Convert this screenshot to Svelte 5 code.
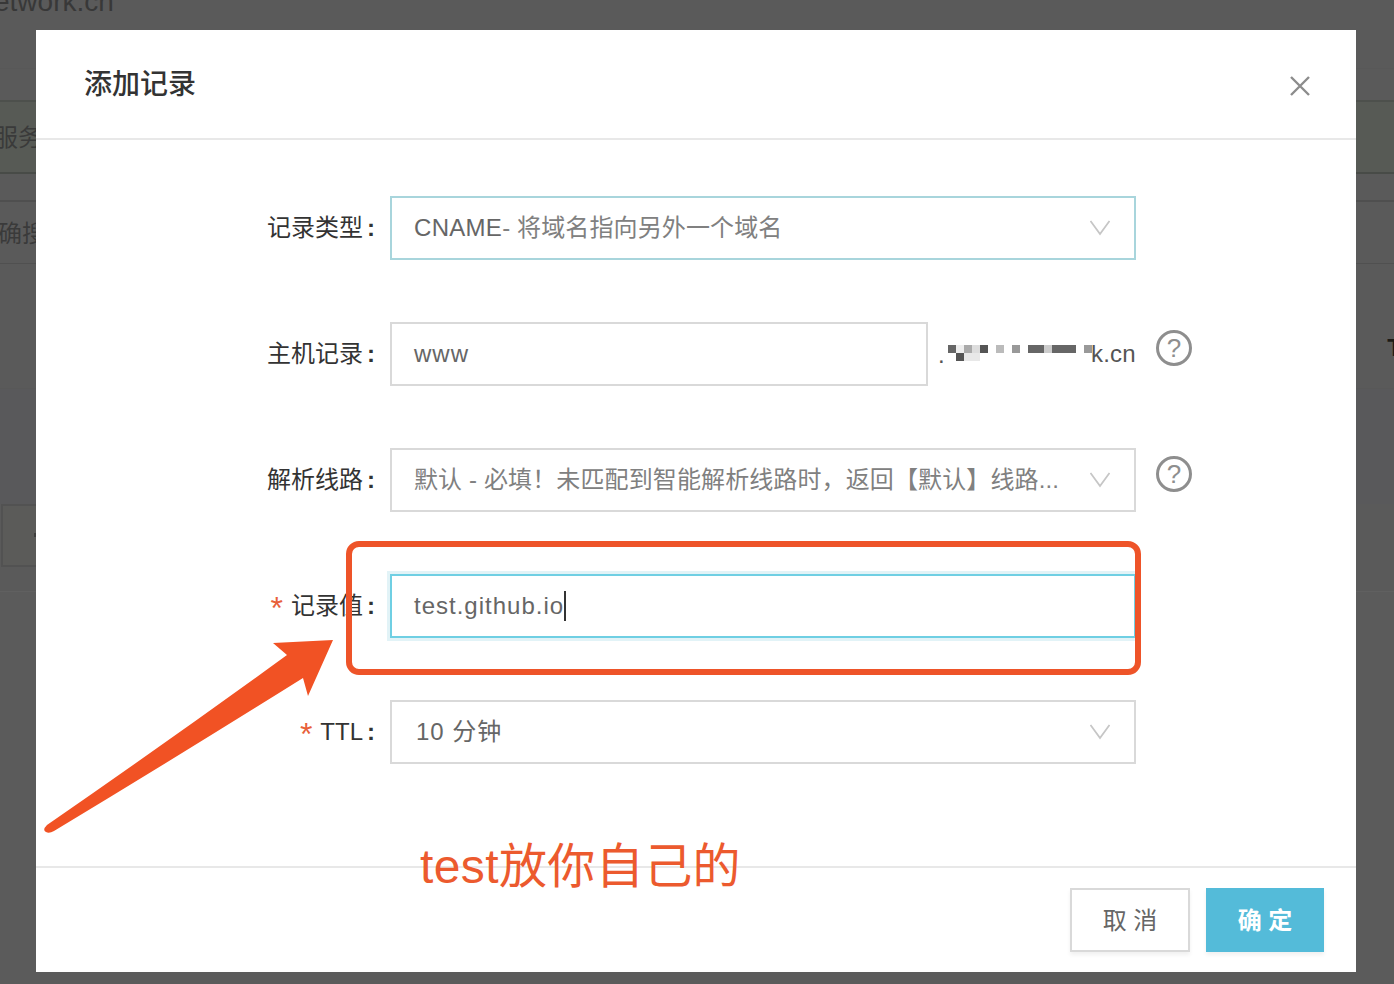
<script lang='ts'>
  // mosaic over the blurred domain name: x, y, width, colour
  const mosaic: [number, number, number, string][] = [
    [0, 0, 8, '#666'], [8, 0, 8, '#eee'], [16, 0, 8, '#aaa'], [24, 0, 8, '#ddd'], [32, 0, 8, '#555'],
    [48, 0, 8, '#bbb'], [64, 0, 8, '#999'], [80, 0, 16, '#666'], [96, 0, 8, '#ccc'], [104, 0, 24, '#666'],
    [136, 0, 8, '#999'], [8, 8, 8, '#555'], [16, 8, 16, '#e8e8e8']
  ]
</script>

<div class='page'>
  <div class='backdrop'>
    <div class='band top'><span class='domain'>etwork.cn</span></div>
    <div class='band sub'></div>
    <div class='band notice'><span class='cut-a'>服务</span></div>
    <div class='band gap'></div>
    <div class='band search'><span class='cut-b'>确搜</span></div>
    <div class='band table'><span class='edge'>T</span></div>
    <div class='band empty'></div>
    <div class='band pager'><div class='pager-box'><i></i></div></div>
    <div class='band after'></div>
    <div class='band rest'></div>
  </div>

  <div class='modal'>
    <header>
      <h2>添加记录</h2>
      <svg class='close' width='20' height='20' viewBox='0 0 20 20'>
        <path d='M1 1 L19 19 M19 1 L1 19' />
      </svg>
    </header>

    <div class='body'>
      <div class='row'>
        <label>记录类型<b>:</b></label>
        <div class='field wide active-select'>
          <span class='value cname'>CNAME<span class='soft'>- 将域名指向另外一个域名</span></span>
          <svg class='chevron' width='20' height='16' viewBox='0 0 20 16'><path d='M0.5 1 L10 14 L19.5 1' /></svg>
        </div>
      </div>

      <div class='row'>
        <label>主机记录<b>:</b></label>
        <div class='field host'><span class='value latin'>www</span></div>
        <div class='suffix'>
          <span class='dot'>.</span>
          <svg class='blur' width='144' height='16' viewBox='0 0 144 16'>
            {#each mosaic as [x, y, w, fill]}
              <rect {x} {y} width={w} height='8' {fill} />
            {/each}
          </svg>
          <span class='tld'>k.cn</span>
        </div>
        <div class='help'>?</div>
      </div>

      <div class='row'>
        <label>解析线路<b>:</b></label>
        <div class='field wide'>
          <span class='value soft'>默认 - 必填！未匹配到智能解析线路时，返回【默认】线路...</span>
          <svg class='chevron' width='20' height='16' viewBox='0 0 20 16'><path d='M0.5 1 L10 14 L19.5 1' /></svg>
        </div>
        <div class='help'>?</div>
      </div>

      <div class='row'>
        <label><em>*</em>记录值<b>:</b></label>
        <div class='field wide focused'>
          <span class='value latin'>test.github.io</span><span class='caret'></span>
        </div>
      </div>

      <div class='row'>
        <label><em>*</em>TTL<b>:</b></label>
        <div class='field wide'>
          <span class='value ttl'>10 分钟</span>
          <svg class='chevron' width='20' height='16' viewBox='0 0 20 16'><path d='M0.5 1 L10 14 L19.5 1' /></svg>
        </div>
      </div>
    </div>

    <footer>
      <button class='cancel'>取 消</button>
      <button class='ok'>确 定</button>
    </footer>
  </div>

  <!-- hand drawn markup on top of the screenshot -->
  <svg class='markup' width='1394' height='984' viewBox='0 0 1394 984'>
    <rect x='349' y='544' width='789' height='128' rx='10' />
    <path d='M333 640 L273 643 L287 655 Q170 740 47 825 Q42 830 46 832 Q49 834 54 831 Q180 755 303 678 L308 696 Z' />
  </svg>
  <div class='note'>test放你自己的</div>
</div>

<style>
:global(body) {
  margin: 0;
  font-family: "Liberation Sans", "Noto Sans CJK SC", sans-serif;
}
.page {
  position: relative;
  display: grid;
  width: 1394px;
  height: 984px;
  overflow: hidden;
  background: #5a5a5a;
}
.backdrop, .modal {
  grid-area: 1 / 1;
}

/* dimmed page behind the dialog */
.backdrop {
  display: flex;
  flex-direction: column;
  height: 984px;
  overflow: hidden;
}
.band {
  box-sizing: border-box;
  display: flex;
  align-items: center;
  flex: none;
  border-bottom: 1px solid #525252;
  color: #3a3a3a;
  font-size: 24px;
  line-height: 30px;
}
.top { height: 69px; align-items: flex-start; border-bottom-color: #585858; }
.domain { margin: -18px 0 0 -6px; font-size: 28px; line-height: 40px; color: #383838; }
.sub { height: 33px; border-bottom: 2px solid #4d504c; }
.notice { height: 72px; padding-top: 2px; background: #575a55; border-bottom: 2px solid #484b47; }
.cut-a { margin-left: -6px; }
.gap { height: 28px; border-bottom: 2px solid #4f4f4f; }
.search { height: 62px; padding-top: 2px; border-bottom-color: #505050; }
.cut-b { margin-left: -2px; }
.table { height: 125px; justify-content: flex-end; border-bottom-color: #585858; padding-top: 43px; }
.edge { margin-right: -8px; font-weight: bold; color: #1c1a16; }
.empty { height: 115px; border-bottom: 0; background: #59595b; }
.pager { height: 62px; border-bottom: 0; }
.pager-box {
  box-sizing: border-box;
  display: flex;
  align-items: center;
  width: 60px;
  height: 63px;
  margin-left: 1px;
  background: #5b5b59;
  border: 2px solid #525252;
}
.pager-box i { width: 2px; height: 4px; margin-left: 31px; background: #3e3e3e; }
.after { height: 26px; border-bottom-color: #606060; }
.rest { flex: 1; border-bottom: 0; background: #5b5b5b; }

/* dialog */
.modal {
  position: relative;
  display: flex;
  flex-direction: column;
  margin: 30px 38px 12px 36px;
  background: #fff;
}
header {
  display: flex;
  align-items: center;
  justify-content: space-between;
  box-sizing: border-box;
  height: 110px;
  padding: 0 46px 0 48px;
  border-bottom: 2px solid #e8e8e8;
}
h2 {
  margin: 2px 0 0;
  font-size: 28px;
  line-height: 36px;
  font-weight: 500;
  color: #333;
}
.close { margin-top: 4px; }
.close path { fill: none; stroke: #8c8c8c; stroke-width: 2.4; }

.body {
  flex: 1;
  padding-top: 56px;
}
.row {
  display: flex;
  align-items: center;
  height: 64px;
  margin-bottom: 62px;
}
label {
  width: 339px;
  margin-right: 15px;
  text-align: right;
  font-size: 24px;
  line-height: 32px;
  white-space: nowrap;
  color: #333;
}
label b {
  margin-left: 4px;
  font-weight: 700;
}
em {
  margin-right: 8px;
  font-size: 32px;
  line-height: 0;
  font-style: normal;
  vertical-align: -5px;
  color: #e8603a;
}
.field {
  box-sizing: border-box;
  position: relative;
  display: flex;
  align-items: center;
  height: 64px;
  padding: 0 24px 0 22px;
  border: 2px solid #d9d9d9;
  font-size: 24px;
  line-height: 32px;
  color: #666;
}
.wide { width: 746px; justify-content: space-between; }
.host { width: 538px; }
.active-select { border-color: #a8d5dc; }
.focused {
  justify-content: flex-start;
  border-color: #6fcfe3;
  box-shadow: 0 0 0 3px #e2f3f7;
}
.value { white-space: nowrap; }
.cname { letter-spacing: 0.3px; }
.latin { letter-spacing: 1px; }
.soft { color: #808080; letter-spacing: 0.12px; }
.ttl { margin-left: 2px; letter-spacing: 1px; }
.caret { width: 2px; height: 30px; margin-left: 0; background: #333; }
.chevron { flex: none; }
.chevron path { fill: none; stroke: #c6c6c6; stroke-width: 1.8; }

.suffix {
  display: flex;
  align-items: center;
  width: 208px;
  font-size: 24px;
  line-height: 32px;
  letter-spacing: 0.25px;
  color: #555;
}
.dot { margin-left: 10px; margin-top: 2px; }
.blur { flex: none; margin-left: 3px; margin-top: -2px; margin-right: -1px; }
.help {
  box-sizing: border-box;
  display: flex;
  align-items: center;
  justify-content: center;
  align-self: flex-start;
  width: 36px;
  height: 36px;
  margin: 8px 0 0 20px;
  border: 3px solid #8e8e8e;
  border-radius: 50%;
  font-size: 26px;
  line-height: 30px;
  color: #8e8e8e;
}

footer {
  display: flex;
  justify-content: flex-end;
  gap: 16px;
  box-sizing: border-box;
  height: 106px;
  padding: 20px 32px 0 0;
  border-top: 2px solid #e8e8e8;
}
button {
  box-sizing: border-box;
  height: 64px;
  padding: 2px 0 0;
  font-family: inherit;
  font-size: 24px;
  line-height: 30px;
  box-shadow: 0 3px 4px rgba(0, 0, 0, 0.06);
}
.cancel {
  width: 120px;
  background: #fff;
  border: 2px solid #d9d9d9;
  color: #666;
}
.ok {
  width: 118px;
  background: #54bbd9;
  border: 0;
  color: #fff;
  font-weight: 700;
}

/* annotations */
.markup {
  position: absolute;
  inset: 0;
  pointer-events: none;
}
.markup rect { fill: none; stroke: #ee5429; stroke-width: 6; }
.markup path { fill: #f15224; }
.note {
  position: absolute;
  left: 420px;
  top: 837px;
  font-size: 48px;
  line-height: 60px;
  letter-spacing: 0.4px;
  color: #ec5a2e;
}
</style>
